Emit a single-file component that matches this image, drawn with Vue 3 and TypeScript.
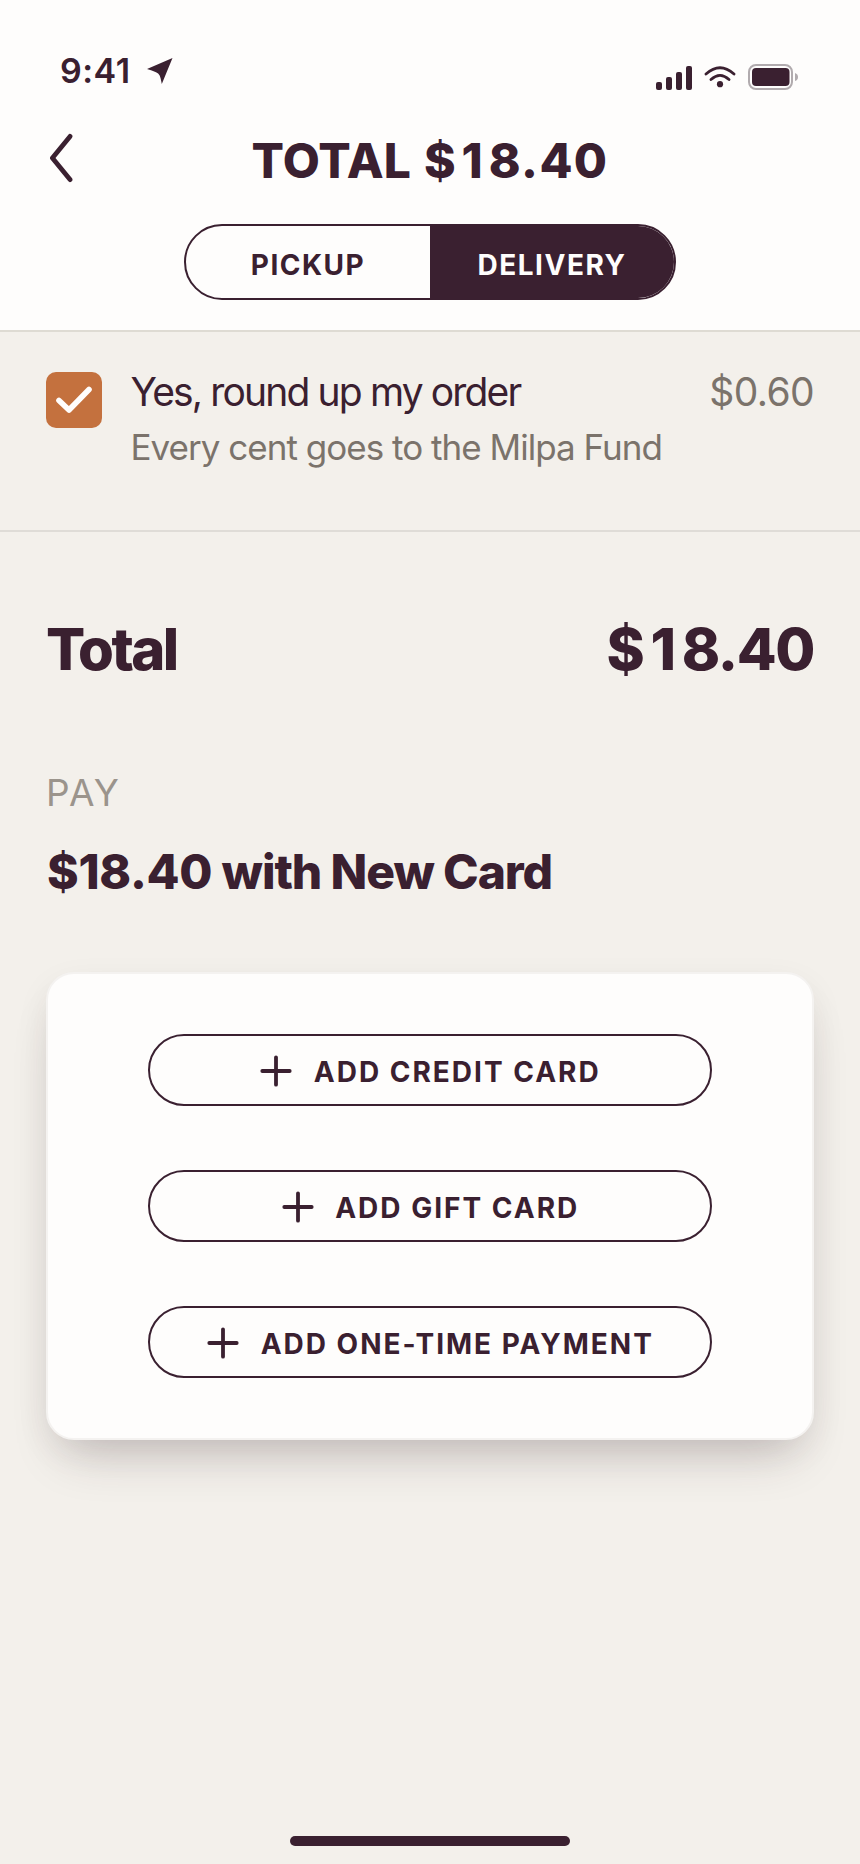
<script setup lang="ts">
import { ref } from 'vue'

type Mode = 'Pickup' | 'Delivery'
const modes: Mode[] = ['Pickup', 'Delivery']
const mode = ref<Mode>('Delivery')
const roundUp = ref(true)
const paymentOptions: string[] = ['Add credit card', 'Add gift card', 'Add one-time payment']
</script>

<template>
  <div class="screen">
    <header class="header">
      <div class="status">
        <div class="clock">
          <span class="time">9:41</span>
          <svg class="location" width="26" height="26" viewBox="0 0 26 26">
            <path d="M25.5 0 14.8 26Q13.5 19 12.5 17.2 11.5 15.3 9 14.2 5 12.3 0 11Z" fill="currentColor" />
          </svg>
        </div>
        <div class="indicators">
          <svg width="36" height="24" viewBox="0 0 36 24" fill="currentColor">
            <rect x="0" y="16" width="6" height="8" rx="2" />
            <rect x="10" y="11" width="6" height="13" rx="2" />
            <rect x="20" y="6" width="6" height="18" rx="2" />
            <rect x="30" y="0" width="6" height="24" rx="2" />
          </svg>
          <svg class="wifi" width="32" height="22" viewBox="0 0 32 22" fill="none" stroke="currentColor" stroke-width="2.8" stroke-linecap="round">
            <path d="M2 8Q16-4.6 30 8M7 13.5Q16 5.2 25 13.5" />
            <circle cx="16" cy="18.2" r="3.1" fill="currentColor" stroke="none" />
          </svg>
          <svg class="battery" width="50" height="26" viewBox="0 0 50 26">
            <rect x="1" y="1" width="43" height="24" rx="7" fill="none" stroke="#b1abae" stroke-width="2" />
            <rect x="4" y="4" width="37.5" height="18" rx="4" fill="currentColor" />
            <path d="M47 9q3 1 3 4t-3 4z" fill="#b1abae" />
          </svg>
        </div>
      </div>
      <div class="nav">
        <button class="back" aria-label="Back">
          <svg width="24" height="50" viewBox="0 0 24 50" fill="none" stroke="currentColor" stroke-width="4.8" stroke-linecap="round" stroke-linejoin="round">
            <path d="M21 3.4 3.4 25 21 46.6" />
          </svg>
        </button>
        <h1>TOTAL <span class="price"><span class="lead-digits">$1</span>8.40</span></h1>
      </div>
      <div class="toggle">
        <button v-for="m in modes" :key="m" :class="{ active: m === mode }" @click="mode = m">{{ m }}</button>
      </div>
    </header>

    <section class="round-up">
      <button class="check" role="checkbox" :aria-checked="roundUp" @click="roundUp = !roundUp">
        <svg v-if="roundUp" width="56" height="56" viewBox="0 0 56 56" fill="none" stroke="#fffdfc" stroke-width="5.6" stroke-linecap="round" stroke-linejoin="round">
          <path d="M13 28.5 23 38 43 17.5" />
        </svg>
      </button>
      <div class="copy">
        <div class="lead">Yes, round up my order</div>
        <div class="note">Every cent goes to the Milpa Fund</div>
      </div>
      <div class="amount">$0.60</div>
    </section>

    <section class="total">
      <span class="total-label">Total</span>
      <span class="total-value"><span class="lead-digits">$1</span>8.40</span>
    </section>

    <section class="pay">
      <div class="eyebrow">PAY</div>
      <h2><span class="price">$18.40</span> with New Card</h2>
      <div class="card">
        <button v-for="option in paymentOptions" :key="option" class="option">
          <svg width="32" height="32" viewBox="0 0 32 32" stroke="currentColor" stroke-width="3.8" stroke-linecap="round">
            <path d="M16 2.3V29.7M2.3 16H29.7" />
          </svg>
          <span>{{ option }}</span>
        </button>
      </div>
    </section>
    <div class="home"></div>
  </div>
</template>

<style>
body {
  margin: 0;
  background: #f3f0eb;
}
</style>

<style scoped>
.screen {
  box-sizing: border-box;
  width: 860px;
  height: 1864px;
  display: flex;
  flex-direction: column;
  overflow: hidden;
  background: #f3f0eb;
  color: #3a2030;
  font-family: Inter, 'Liberation Sans', sans-serif;
}
button {
  padding: 0;
  border: 0;
  background: none;
  color: inherit;
  font: inherit;
}
svg {
  display: block;
  flex: none;
}
h1,
h2 {
  margin: 0;
}
.header {
  box-sizing: border-box;
  height: 332px;
  flex: none;
  display: flex;
  flex-direction: column;
  align-items: center;
  background: #fefdfc;
  border-bottom: 2px solid #dedbd3;
}
.status {
  box-sizing: border-box;
  width: 100%;
  height: 130px;
  flex: none;
  display: flex;
  justify-content: space-between;
  align-items: flex-start;
  padding: 50px 62px 0 60px;
}
.clock {
  display: flex;
}
.time {
  width: 87px;
  font-size: 34px;
  line-height: 41px;
  font-weight: 600;
  letter-spacing: 0.5px;
}
.location {
  margin-top: 8px;
}
.indicators {
  display: flex;
  padding-top: 16px;
}
.wifi {
  margin-left: 12px;
}
.battery {
  margin: -2px 0 0 12px;
}
.nav {
  width: 100%;
  height: 94px;
  flex: none;
  display: grid;
  grid-template-columns: 90px 1fr 90px;
}
.back {
  justify-self: start;
  align-self: start;
  margin: 3px 0 0 49px;
}
h1 {
  text-align: center;
  font-size: 48px;
  line-height: 62px;
  font-weight: 800;
  letter-spacing: 0.2px;
  word-spacing: 2px;
}
h1 .price {
  letter-spacing: 1.4px;
}
h1 .lead-digits {
  letter-spacing: 6px;
}
.toggle {
  box-sizing: border-box;
  width: 492px;
  height: 76px;
  display: grid;
  grid-template-columns: 1fr 1fr;
  border: 2px solid #3a2030;
  border-radius: 38px;
  overflow: hidden;
}
.toggle button,
.option {
  font-size: 28px;
  font-weight: 700;
  text-transform: uppercase;
}
.toggle button {
  padding-top: 5px;
  letter-spacing: 1.5px;
}
.toggle .active {
  background: #3a2030;
  color: #fefdfc;
}
.round-up {
  box-sizing: border-box;
  height: 200px;
  flex: none;
  display: flex;
  align-items: flex-start;
  padding: 40px 46px 0;
  border-bottom: 2px solid #dfdcd7;
}
.check {
  width: 56px;
  height: 56px;
  border-radius: 10px;
  background: #c4713e;
}
.copy {
  margin-left: 28.5px;
  flex: 1;
}
.lead,
.amount {
  font-size: 39px;
  line-height: 48px;
  margin-top: -4px;
}
.lead {
  letter-spacing: -1.85px;
}
.note {
  margin-top: 9px;
  font-size: 35px;
  line-height: 44px;
  letter-spacing: -0.98px;
  color: #7b736b;
}
.amount {
  letter-spacing: -0.6px;
  color: #7b736b;
}
.total {
  height: 234px;
  flex: none;
  display: flex;
  justify-content: space-between;
  padding: 0 46px;
}
.total-label,
.total-value {
  margin-top: 82px;
  font-size: 58px;
  line-height: 70px;
  font-weight: 800;
}
.total-label {
  letter-spacing: -2.6px;
}
.total-value {
  letter-spacing: -1.4px;
}
.total-value .lead-digits {
  letter-spacing: 5.7px;
}
.pay {
  padding: 0 46px;
}
.eyebrow {
  margin-top: 4px;
  font-size: 37px;
  line-height: 46px;
  letter-spacing: 2px;
  color: #9b948c;
}
h2 {
  margin: 27px 0 0 1px;
  font-size: 48px;
  line-height: 58px;
  font-weight: 800;
  letter-spacing: -1.1px;
}
h2 .price {
  letter-spacing: -0.3px;
}
.card {
  box-sizing: border-box;
  height: 468px;
  margin-top: 71px;
  display: flex;
  flex-direction: column;
  align-items: center;
  gap: 64px;
  padding-top: 60px;
  background: #fefdfc;
  border: 2px solid #f4f2f0;
  border-radius: 28px;
  box-shadow:
    0 30px 52px -20px rgba(54, 34, 42, 0.24),
    0 12px 36px -4px rgba(54, 40, 42, 0.09);
}
.option {
  box-sizing: border-box;
  width: 564px;
  height: 72px;
  display: flex;
  justify-content: center;
  align-items: center;
  gap: 21.5px;
  letter-spacing: 2px;
  border: 2px solid #3a2030;
  border-radius: 36px;
}
.option svg {
  margin-top: 2px;
}
.option span {
  padding-top: 3px;
  margin-right: -1px;
}
.home {
  width: 280px;
  height: 10px;
  margin: auto auto 18px;
  border-radius: 5px;
  background: #3a2030;
}
</style>
